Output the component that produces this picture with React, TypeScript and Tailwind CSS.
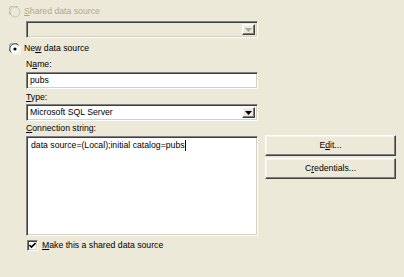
import React from 'react';

const sunken =
    'border border-t-[#808080] border-l-[#808080] border-b-white border-r-white shadow-[inset_1px_1px_0_#404040,inset_-1px_-1px_0_#d4d0c8]';
const raised =
    'border border-t-white border-l-white border-b-[#404040] border-r-[#404040] shadow-[inset_-1px_-1px_0_#808080,inset_1px_1px_0_#f4f3ee]';

const Radio = ({ checked, disabled }: { checked?: boolean; disabled?: boolean }) => (
    <svg width="12" height="12" viewBox="0 0 12 12" className="shrink-0">
        <circle cx="6" cy="6" r="5" fill={disabled ? '#ece9d8' : '#ffffff'} stroke={disabled ? '#c9c6b8' : 'none'} strokeWidth="1" />
        <path d="M1.2 8.5 A5 5 0 0 1 8.5 1.2" stroke={disabled ? '#aca899' : '#808080'} strokeWidth="1" fill="none" />
        {!disabled && <path d="M2.3 9.5 A4 4 0 0 1 9.5 2.3" stroke="#404040" strokeWidth="1" fill="none" />}
        {!disabled && <path d="M10.8 3.5 A5 5 0 0 1 3.5 10.8" stroke="#ffffff" strokeWidth="1" fill="none" />}
        {checked && <circle cx="6" cy="6" r="1.6" fill="#000000" />}
    </svg>
);

const DropButton = ({ disabled }: { disabled?: boolean }) => (
    <div className={`w-[13px] h-full bg-[#ece9d8] flex items-center justify-center ${raised}`}>
        <svg width="7" height="4" viewBox="0 0 7 4">
            <path d="M0 0 H7 L3.5 4 Z" fill={disabled ? '#aca899' : '#000000'} />
        </svg>
    </div>
);

const App = () => {
    return (
        <div className="w-[404px] h-[277px] bg-[#ece9d8] font-['Liberation_Sans',Arial,sans-serif] text-[8.7px] leading-[11px] text-black pt-[6px] pl-[9px] overflow-hidden">
            {/* Shared */}
            <div className="flex items-center gap-[3px] h-[11px]">
                <Radio disabled />
                <span className="text-[#aca899]"><u>S</u>hared data source</span>
            </div>
            <div className={`ml-[17px] mt-[4px] w-[232px] h-[17px] bg-[#ece9d8] flex justify-end p-[2px] ${sunken}`}>
                <DropButton disabled />
            </div>

            {/* New */}
            <div className="flex items-center gap-[3px] h-[11px] mt-[5px]">
                <Radio checked />
                <span>Ne<u>w</u> data source</span>
            </div>

            <div className="ml-[17px]">
                <div className="mt-[5px] h-[11px]">N<u>a</u>me:</div>
                <div className={`mt-[2px] w-[232px] h-[17px] bg-white px-[3px] flex items-center ${sunken}`}>pubs</div>

                <div className="mt-[3px] h-[11px]"><u>T</u>ype:</div>
                <div className={`mt-[1px] w-[232px] h-[17px] bg-white flex items-center justify-between pl-[3px] p-[2px] ${sunken}`}>
                    <span>Microsoft SQL Server</span>
                    <DropButton />
                </div>

                <div className="mt-[2px] h-[11px]"><u>C</u>onnection string:</div>
                <div className="mt-[2px] flex gap-[7px]">
                    <div className={`w-[232px] h-[100px] bg-white px-[4px] pt-[3px] ${sunken}`}>
                        <span>data source=(Local);initial catalog=pubs</span>
                        <span className="inline-block w-px h-[11px] bg-black align-top" />
                    </div>
                    <div className="flex flex-col gap-[2px] -mt-[1px]">
                        <div className={`w-[131px] h-[21px] bg-[#ece9d8] flex items-center justify-center ${raised}`}>
                            E<u>d</u>it...
                        </div>
                        <div className={`w-[131px] h-[21px] bg-[#ece9d8] flex items-center justify-center ${raised}`}>
                            C<u>r</u>edentials...
                        </div>
                    </div>
                </div>

                <div className="mt-[4px] flex items-center gap-[4px] h-[11px] pl-[1px]">
                    <div className={`w-[11px] h-[11px] bg-white flex items-center justify-center ${sunken}`}>
                        <svg width="7" height="7" viewBox="0 0 7 7">
                            <path d="M0.5 3 L2.5 5 L6.5 1" stroke="#000000" strokeWidth="1.6" fill="none" />
                        </svg>
                    </div>
                    <span><u>M</u>ake this a shared data source</span>
                </div>
            </div>
        </div>
    );
};

export default App;
